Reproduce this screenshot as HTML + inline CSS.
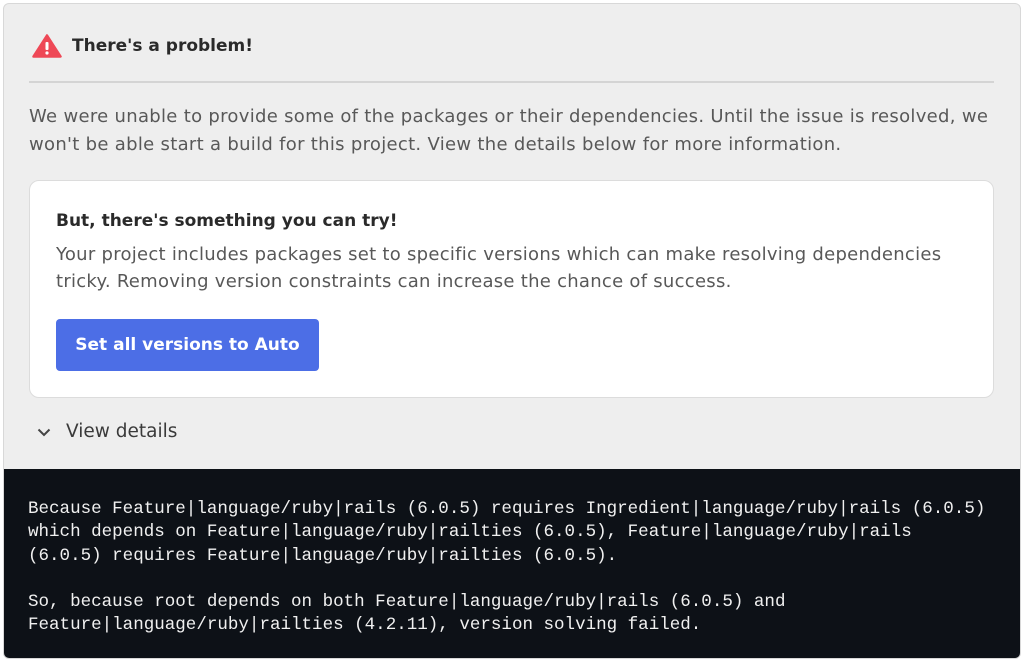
<!DOCTYPE html>
<html><head><meta charset="utf-8"><style>
html,body{margin:0;padding:0;background:#fff;width:1024px;height:661px;overflow:hidden}
.card{position:absolute;left:3px;top:3px;width:1016px;height:654px;background:#eeeeee;border:1px solid #d8d8d8;border-radius:6px;overflow:hidden;font-family:"DejaVu Sans",sans-serif;color:#333}
.nw{white-space:nowrap}
.title{position:absolute;left:68px;top:32px;font-size:17px;font-weight:bold;color:#2a2a2a}
.icon{position:absolute;left:28px;top:30px}
.hr{position:absolute;left:25px;width:965px;top:77px;height:2px;background:#d4d4d4}
.p1{position:absolute;left:25px;top:99px;font-size:18px;letter-spacing:0.3px;line-height:28px;color:#585858}
.inner{position:absolute;left:25px;top:176px;width:963px;height:216px;background:#fff;border:1px solid #dcdcdc;border-radius:10px}
.h2{position:absolute;left:26px;top:30px;font-size:17px;font-weight:bold;color:#2a2a2a}
.p2{position:absolute;left:26px;top:60px;font-size:18px;letter-spacing:0.27px;line-height:27px;color:#585858}
.btn{position:absolute;left:26px;top:138px;width:263px;height:52px;background:#4c6ee6;border-radius:4px;color:#fff;font-size:17px;font-weight:bold;line-height:52px;text-align:center}
.vd{position:absolute;left:62px;top:417px;font-size:18.5px;color:#3a3a3a}
.chev{position:absolute;left:33px;top:424px}
.dark{position:absolute;left:0;top:465px;width:1016px;height:190px;background:#0d1117;color:#f0f0f0;font-family:"Liberation Mono",monospace;font-size:17.55px;line-height:23.3px;white-space:pre;padding:29px 0 0 24px;box-sizing:border-box}
</style></head><body>
<div class="card">
<svg class="icon" width="30" height="24" viewBox="0 0 30 24"><path d="M15 1.5 L28.5 22.5 L1.5 22.5 Z" fill="#ee4856" stroke="#ee4856" stroke-width="2.5" stroke-linejoin="round"/><rect x="13.5" y="8" width="3" height="8" rx="1" fill="#fff"/><circle cx="15" cy="19" r="1.6" fill="#fff"/></svg>
<div class="title nw">There's a problem!</div>
<div class="hr"></div>
<div class="p1 nw">We were unable to provide some of the packages or their dependencies. Until the issue is resolved, we<br>won't be able start a build for this project. View the details below for more information.</div>
<div class="inner">
<div class="h2 nw">But, there's something you can try!</div>
<div class="p2 nw">Your project includes packages set to specific versions which can make resolving dependencies<br>tricky. Removing version constraints can increase the chance of success.</div>
<div class="btn nw">Set all versions to Auto</div>
</div>
<svg class="chev" width="14" height="9" viewBox="0 0 14 9"><path d="M1.5 1.5 L7 7 L12.5 1.5" fill="none" stroke="#444" stroke-width="2"/></svg>
<div class="vd nw">View details</div>
<div class="dark">Because Feature|language/ruby|rails (6.0.5) requires Ingredient|language/ruby|rails (6.0.5)
which depends on Feature|language/ruby|railties (6.0.5), Feature|language/ruby|rails
(6.0.5) requires Feature|language/ruby|railties (6.0.5).

So, because root depends on both Feature|language/ruby|rails (6.0.5) and
Feature|language/ruby|railties (4.2.11), version solving failed.</div>
</div>
</body></html>
